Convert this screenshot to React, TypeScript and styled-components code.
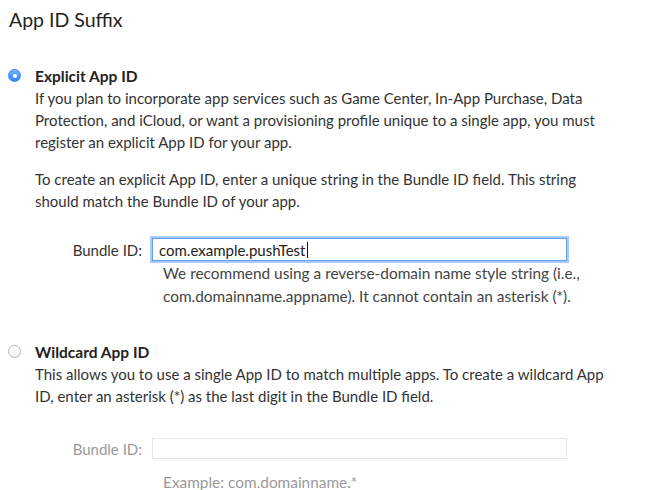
import styled, { createGlobalStyle } from 'styled-components';

const GlobalStyle = createGlobalStyle`
  html, body {
    margin: 0;
    padding: 0;
    background: #fff;
  }
  body {
    font-family: Lato, "Open Sans", Arial, sans-serif;
    color: #333;
  }
`;

const Page = styled.div`
  padding: 6px 0 0 8px;
  width: 642px;
  height: 490px;
  box-sizing: border-box;
  overflow: hidden;
`;

const Title = styled.h2`
  margin: 0 0 31px 1px;
  font-size: 19.5px;
  font-weight: 400;
  line-height: 28px;
  color: #222;
`;

const Option = styled.div<{ $gap?: number }>`
  display: flex;
  align-items: flex-start;
  margin-top: ${p => p.$gap ?? 0}px;
`;

const Radio = styled.span<{ $checked?: boolean }>`
  flex: none;
  width: 13px;
  height: 13px;
  margin: 4px 14px 0 0;
  border-radius: 50%;
  box-sizing: border-box;
  position: relative;
  ${p => p.$checked
    ? `
      background: linear-gradient(#6fb6ff, #2b86f5);
      border: 1px solid #3a8ae8;
      &::after {
        content: '';
        position: absolute;
        left: 50%;
        top: 50%;
        width: 4px;
        height: 4px;
        margin: -2px 0 0 -2px;
        border-radius: 50%;
        background: #fff;
      }
    `
    : `
      background: linear-gradient(#fff, #f3f3f3);
      border: 1px solid #b5b5b5;
    `}
`;

const Body = styled.div`
  flex: 1;
`;

const OptionTitle = styled.div`
  font-size: 15.5px;
  font-weight: 700;
  line-height: 22px;
  color: #222;
`;

const Para = styled.p<{ $gap?: number }>`
  margin: ${p => p.$gap ?? 0}px 0 0;
  font-size: 15px;
  line-height: 22px;
  color: #333;
`;

const FieldRow = styled.div<{ $gap: number }>`
  display: flex;
  align-items: center;
  gap: 10px;
  margin-top: ${p => p.$gap}px;
`;

const Label = styled.span<{ $disabled?: boolean }>`
  width: 107px;
  text-align: right;
  font-size: 15px;
  color: ${p => (p.$disabled ? '#999' : '#333')};
`;

const Field = styled.div<{ $focused?: boolean }>`
  width: 415px;
  height: ${p => (p.$focused ? 23 : 21)}px;
  box-sizing: border-box;
  padding: 0 6px;
  display: flex;
  align-items: center;
  font-size: 15px;
  color: #222;
  background: #fff;
  border: 1px solid ${p => (p.$focused ? '#5d9ef0' : '#e6e6e6')};
  box-shadow: ${p => (p.$focused ? '0 0 0 2px rgba(100, 160, 245, 0.55)' : 'none')};
`;

const Caret = styled.span`
  display: inline-block;
  width: 1px;
  height: 16px;
  background: #111;
  margin-left: 1px;
`;

const Hint = styled.p<{ $gap: number; $muted?: boolean }>`
  margin: ${p => p.$gap}px 0 0 128px;
  font-size: 15.4px;
  line-height: 23px;
  color: ${p => (p.$muted ? '#9a9a9a' : '#444')};
`;

export default function App() {
  return (
    <>
      <GlobalStyle />
      <Page>
        <Title>App ID Suffix</Title>

        <Option>
          <Radio $checked />
          <Body>
            <OptionTitle>Explicit App ID</OptionTitle>
            <Para>
              If you plan to incorporate app services such as Game Center, In-App Purchase, Data
              <br />
              Protection, and iCloud, or want a provisioning profile unique to a single app, you must
              <br />
              register an explicit App ID for your app.
            </Para>
            <Para $gap={15}>
              To create an explicit App ID, enter a unique string in the Bundle ID field. This string
              <br />
              should match the Bundle ID of your app.
            </Para>
            <FieldRow $gap={26}>
              <Label>Bundle ID:</Label>
              <Field $focused>
                com.example.pushTest
                <Caret />
              </Field>
            </FieldRow>
            <Hint $gap={1}>
              We recommend using a reverse-domain name style string (i.e.,
              <br />
              com.domainname.appname). It cannot contain an asterisk (*).
            </Hint>
          </Body>
        </Option>

        <Option $gap={33}>
          <Radio />
          <Body>
            <OptionTitle>Wildcard App ID</OptionTitle>
            <Para>
              This allows you to use a single App ID to match multiple apps. To create a wildcard App
              <br />
              ID, enter an asterisk (*) as the last digit in the Bundle ID field.
            </Para>
            <FieldRow $gap={31}>
              <Label $disabled>Bundle ID:</Label>
              <Field />
            </FieldRow>
            <Hint $gap={12} $muted>
              Example: com.domainname.*
            </Hint>
          </Body>
        </Option>
      </Page>
    </>
  );
}
